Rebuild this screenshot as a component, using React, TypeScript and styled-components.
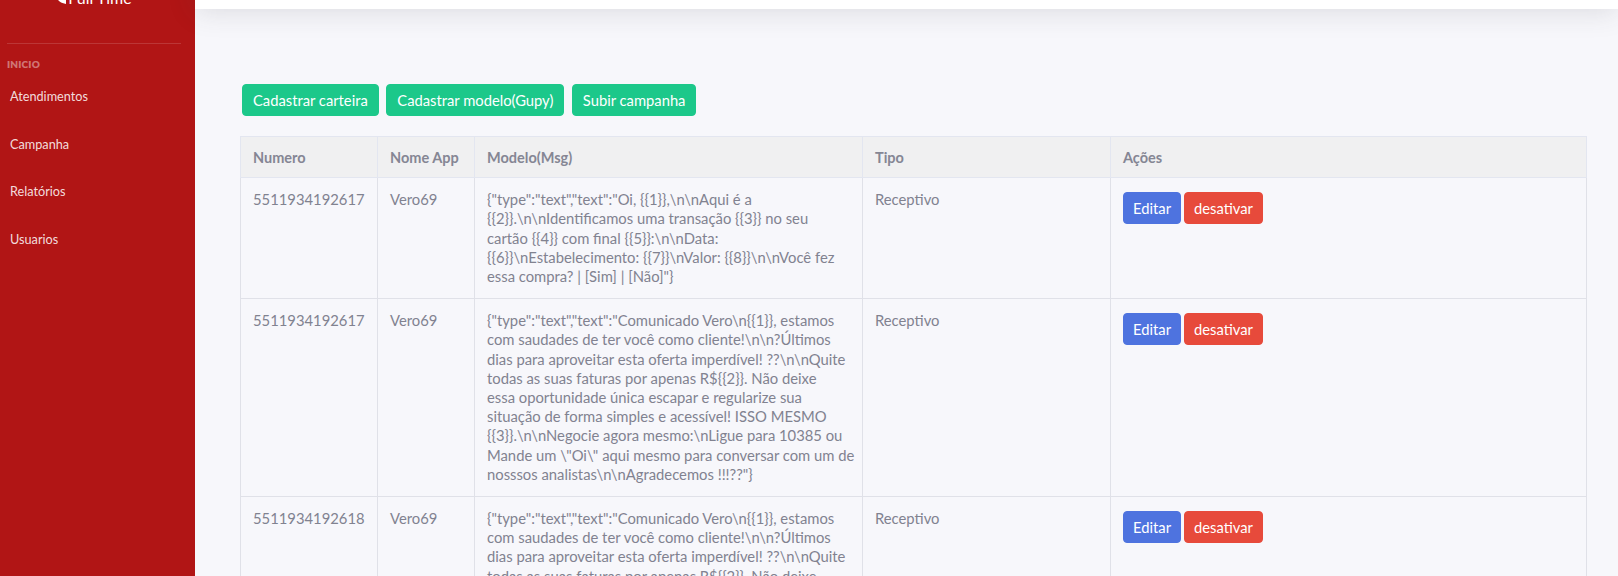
import React from "react";
import styled, { createGlobalStyle } from "styled-components";

const GlobalStyle = createGlobalStyle`
  html, body { margin: 0; padding: 0; }
  body {
    font-family: "Lato", "Open Sans", sans-serif;
    background: #f7f7fb;
    color: #818290;
    overflow: hidden;
  }
  * { box-sizing: border-box; }
`;

const Page = styled.div`
  display: flex;
  min-height: calc(100vh + 61px);
  margin-top: -61px;
`;

const Sidebar = styled.aside`
  width: 195px;
  flex: 0 0 195px;
  background: #b11515;
  display: flex;
  flex-direction: column;
`;

const Brand = styled.div`
  height: 70px;
  display: flex;
  align-items: flex-end;
  justify-content: center;
  gap: 2px;
  padding: 0 6px 3px 0;
  color: #fff;
  font-size: 16px;
  line-height: 1;
  font-weight: 400;
`;

const BrandIcon = styled.svg`
  width: 9px;
  height: 14px;
  margin-bottom: 2px;
`;

const Divider = styled.hr`
  position: relative;
  border: 0;
  border-top: 1px solid rgba(255, 255, 255, 0.14);
  margin: 34px 14px 0 7px;
  &::after {
    content: "";
    position: absolute;
    left: 14px;
    right: 15px;
    top: -1px;
    border-top: 1px solid rgba(255, 255, 255, 0.1);
  }
`;

const SectionHeading = styled.div`
  margin: 15px 0 0 7px;
  font-size: 10px;
  line-height: 10px;
  font-weight: 800;
  letter-spacing: 0.02em;
  text-transform: uppercase;
  color: rgba(255, 255, 255, 0.42);
`;

const Nav = styled.nav`
  display: flex;
  flex-direction: column;
  margin-top: 3px;
`;

const NavLink = styled.a`
  height: 47.7px;
  display: flex;
  align-items: center;
  padding-left: 10px;
  font-size: 12.7px;
  color: rgba(255, 255, 255, 0.86);
  text-decoration: none;
`;

const Main = styled.main`
  flex: 1;
  display: flex;
  flex-direction: column;
  min-width: 0;
`;

const Topbar = styled.header`
  height: 70px;
  background: #fff;
  box-shadow: 0 0.15rem 1.75rem 0 rgba(58, 59, 69, 0.15);
  position: relative;
  z-index: 1;
`;

const Content = styled.section`
  padding: 75px 31px 0 45px;
`;

const Toolbar = styled.div`
  display: flex;
  gap: 7.5px;
  margin-left: 2px;
  margin-bottom: 20px;
`;

const toneColor = { green: "#1cc88a", blue: "#4e73df", red: "#e74a3b" };

const Button = styled.button<{ $tone: "green" | "blue" | "red" }>`
  font-family: "Lato", "Open Sans", sans-serif;
  font-size: 14.75px;
  line-height: 18px;
  height: 32px;
  padding: 6px ${(p) => (p.$tone === "green" ? "10px" : "9px")};
  border-radius: 4px;
  border: 1px solid ${(p) => toneColor[p.$tone]};
  background: ${(p) => toneColor[p.$tone]};
  color: #fff;
  white-space: nowrap;
  cursor: pointer;
`;

const Table = styled.table`
  width: 100%;
  table-layout: fixed;
  border-collapse: collapse;
  border: 1px solid #e3e6f0;
  font-size: 14.8px;
  line-height: 19.2px;
`;

const HeadCell = styled.th`
  background: #f0f0f1;
  text-align: left;
  font-weight: 700;
  font-size: 14.5px;
  color: #858694;
  padding: 10.5px 12px;
  border: 1px solid #e3e6f0;
`;

const Cell = styled.td`
  padding: 12px;
  vertical-align: top;
  border: 1px solid #e0e1e8;
`;

const Line = styled.span`
  display: block;
  white-space: nowrap;
`;

const Actions = styled.div`
  display: flex;
  gap: 3px;
  padding-top: 2px;
`;

const msgA = [
  '{"type":"text","text":"Oi, {{1}},\\n\\nAqui é a',
  "{{2}}.\\n\\nIdentificamos uma transação {{3}} no seu",
  "cartão {{4}} com final {{5}}:\\n\\nData:",
  "{{6}}\\nEstabelecimento: {{7}}\\nValor: {{8}}\\n\\nVocê fez",
  'essa compra? | [Sim] | [Não]"}',
];

const msgB = [
  '{"type":"text","text":"Comunicado Vero\\n{{1}}, estamos',
  "com saudades de ter você como cliente!\\n\\n?Últimos",
  "dias para aproveitar esta oferta imperdível! ??\\n\\nQuite",
  "todas as suas faturas por apenas R${{2}}. Não deixe",
  "essa oportunidade única escapar e regularize sua",
  "situação de forma simples e acessível! ISSO MESMO",
  "{{3}}.\\n\\nNegocie agora mesmo:\\nLigue para 10385 ou",
  'Mande um \\"Oi\\" aqui mesmo para conversar com um de',
  'nosssos analistas\\n\\nAgradecemos !!!??"}',
];

const rows = [
  { numero: "5511934192617", app: "Vero69", msg: msgA, tipo: "Receptivo" },
  { numero: "5511934192617", app: "Vero69", msg: msgB, tipo: "Receptivo" },
  { numero: "5511934192618", app: "Vero69", msg: msgB, tipo: "Receptivo" },
];

const navItems = ["Atendimentos", "Campanha", "Relatórios", "Usuarios"];

export default function App() {
  return (
    <>
      <GlobalStyle />
      <Page>
        <Sidebar>
          <Brand>
            <BrandIcon viewBox="0 0 9 14">
              <path d="M9 0 C3 1 0 4 0 7 C0 10 3 13 9 14 Z" fill="#fff" />
            </BrandIcon>
            <span>Full Time</span>
          </Brand>
          <Divider />
          <SectionHeading>Inicio</SectionHeading>
          <Nav>
            {navItems.map((n) => (
              <NavLink key={n} href="#">
                {n}
              </NavLink>
            ))}
          </Nav>
        </Sidebar>
        <Main>
          <Topbar />
          <Content>
            <Toolbar>
              <Button $tone="green">Cadastrar carteira</Button>
              <Button $tone="green">Cadastrar modelo(Gupy)</Button>
              <Button $tone="green">Subir campanha</Button>
            </Toolbar>
            <Table>
              <colgroup>
                <col style={{ width: 137 }} />
                <col style={{ width: 97 }} />
                <col style={{ width: 388 }} />
                <col style={{ width: 248 }} />
                <col />
              </colgroup>
              <thead>
                <tr>
                  <HeadCell>Numero</HeadCell>
                  <HeadCell>Nome App</HeadCell>
                  <HeadCell>Modelo(Msg)</HeadCell>
                  <HeadCell>Tipo</HeadCell>
                  <HeadCell>Ações</HeadCell>
                </tr>
              </thead>
              <tbody>
                {rows.map((r, i) => (
                  <tr key={i}>
                    <Cell>{r.numero}</Cell>
                    <Cell>{r.app}</Cell>
                    <Cell>
                      {r.msg.map((l, j) => (
                        <Line key={j}>{l}</Line>
                      ))}
                    </Cell>
                    <Cell>{r.tipo}</Cell>
                    <Cell>
                      <Actions>
                        <Button $tone="blue">Editar</Button>
                        <Button $tone="red">desativar</Button>
                      </Actions>
                    </Cell>
                  </tr>
                ))}
              </tbody>
            </Table>
          </Content>
        </Main>
      </Page>
    </>
  );
}
